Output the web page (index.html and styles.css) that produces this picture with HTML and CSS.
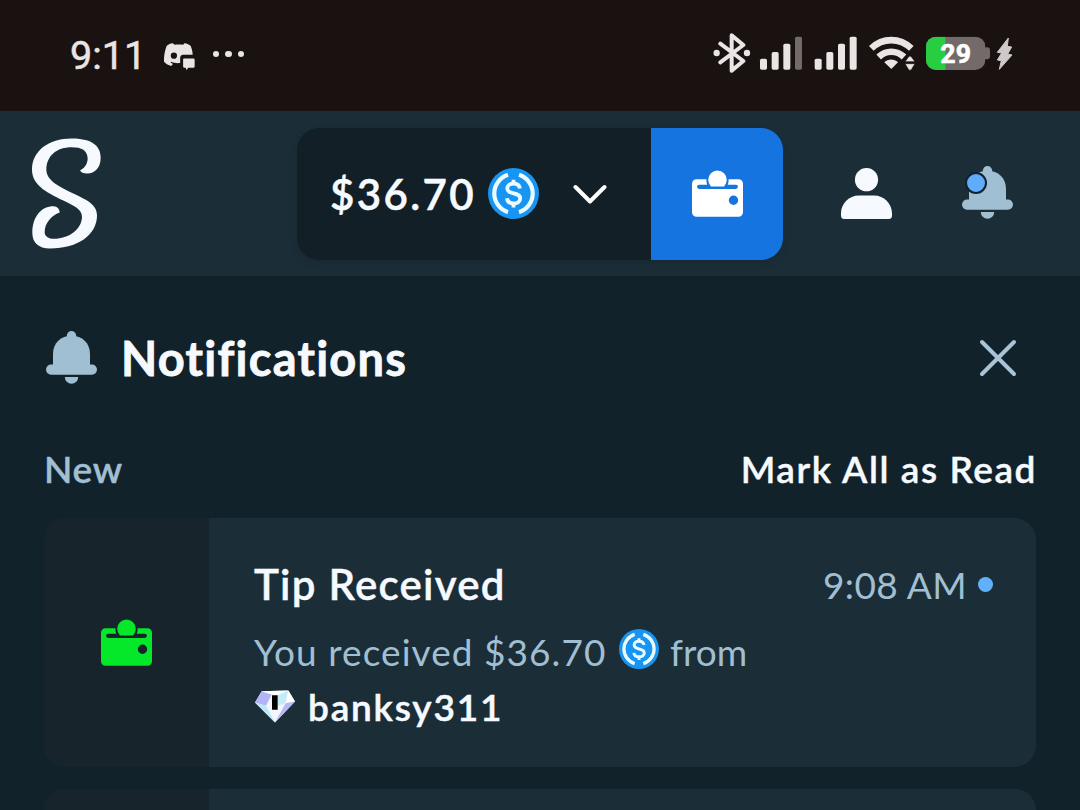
FILE: index.html
```html
<!DOCTYPE html>
<html lang="en">
<head>
  <meta charset="UTF-8">
  <meta name="viewport" content="width=device-width, initial-scale=1.0">
  <title>Notifications</title>
  <link rel="stylesheet" href="styles.css">
</head>
<body>

<!-- shared icons -->
<svg class="sprite">
  <symbol id="bell" viewBox="0 0 51 53">
    <circle cx="25.5" cy="4.7" r="4.7"/>
    <path d="M7 34V23C7 12 15 4.800 25.500 4.800S44 12 44 23v11z"/>
    <rect x="0" y="33.500" width="51" height="10.200" rx="5.100"/>
    <path d="M18.800 46h13.400a6.700 6.700 0 0 1-13.400 0z"/>
  </symbol>
  <symbol id="wallet" viewBox="0 0 51 47">
    <path fill-rule="evenodd" d="M4.500 9.300H14.400a12 12 0 0 0 .8 5.400H7.200a2.150 2.150 0 0 0 0 4.300h36.600a2.150 2.150 0 0 0 0-4.300H35.800a12 12 0 0 0 .8-5.400h9.900A4.500 4.500 0 0 1 51 13.800v28.400a4.500 4.500 0 0 1-4.500 4.500h-42A4.500 4.500 0 0 1 0 42.200V13.800a4.500 4.500 0 0 1 4.500-4.500zM41.500 25.600a4.700 4.700 0 1 0 0 9.400 4.700 4.700 0 0 0 0-9.400z"/>
    <path d="M18.900 16.400a9.300 9.300 0 1 1 13.200 0z"/>
  </symbol>
  <symbol id="usdc" viewBox="0 0 51 51">
    <circle cx="25.500" cy="25.500" r="25.500" fill="#1894f2"/>
    <g fill="none" stroke="#e9fbff" stroke-width="4.200">
      <path d="M20 6.800a19.600 19.600 0 0 0 0 37.400M31 6.800a19.600 19.600 0 0 1 0 37.400"/>
      <path stroke-width="3.800" d="M32 20.500c-.6-3.200-3-5-6.400-5-3.700 0-6.300 2-6.300 5 0 6.800 12.900 3 12.900 10 0 3-2.700 5-6.600 5-3.800 0-6.300-2-6.600-5.200M25.500 11.800v4M25.500 35v4.400"/>
    </g>
  </symbol>
</svg>

<!-- phone status bar -->
<div class="status-bar">
  <div class="status-left">
    <span class="clock">9:11</span>
    <svg class="discord" viewBox="342 68 94 82">
      <path fill="#e9e5e4" d="M369 69c-9 1-15 4-19 8-5 12-9 30-8 48 6 6 14 11 22 13l5-6-7-5 2-2c9 4 16 5 27 4v-15c0-6 3-10 9-10h29c0-10-3-20-6-27-4-4-11-7-19-8l-4 4c-9-1-17-1-26 0l-5-4zM372 97a9 9 0 1 1 0 19 9 9 0 0 1 0-19z"/>
      <path fill="#e9e5e4" d="M402 115h29q4 0 4 4v20q0 4-4 4h-15l-6 7-2-7h-4q-4 0-4-4v-20q0-4 2-4z"/>
    </svg>
    <span class="dots"><i></i><i></i><i></i></span>
  </div>
  <div class="status-right">
    <svg width="41.670" height="40" viewBox="40 40 125 120">
      <path fill="none" stroke="#e9e5e4" stroke-width="12" stroke-linecap="round" stroke-linejoin="round" d="M62 72l69 52-35 29V47l35 29-69 52"/>
      <circle cx="51" cy="100" r="9.500"/><circle cx="142" cy="100" r="9.500"/>
    </svg>
    <svg width="53.330" height="40" viewBox="165 40 160 120">
      <rect x="180" y="117" width="21" height="33" rx="5"/>
      <rect x="215" y="97" width="21" height="53" rx="5"/>
      <rect x="250" y="72" width="21" height="78" rx="5"/>
      <rect x="285" y="51" width="21" height="99" rx="5" fill="#726b69"/>
    </svg>
    <svg width="55" height="40" viewBox="325 40 165 120">
      <rect x="345" y="117" width="21" height="33" rx="5"/>
      <rect x="380" y="97" width="21" height="53" rx="5"/>
      <rect x="415" y="72" width="21" height="78" rx="5"/>
      <rect x="450" y="51" width="21" height="99" rx="5"/>
    </svg>
    <svg width="57.670" height="40" viewBox="490 40 173 120">
      <g fill="none" stroke="#e9e5e4" stroke-width="20">
        <path d="M515 86c34-33 85-33 120 0"/>
        <path d="M537 112c22-21 54-21 76 0"/>
      </g>
      <path d="M554 128c11-11 30-11 41 0l-20 20z"/>
      <path d="M616 126l11-15q4-4 8 0l11 15zM616 132h30l-11 18q-4 4-8 0z" stroke="#1a1210" stroke-width="2"/>
    </svg>
    <svg width="72" height="40" viewBox="663 40 216 120">
      <clipPath id="level"><rect x="678" y="51" width="178" height="100" rx="30"/></clipPath>
      <rect x="845" y="83" width="25" height="36" rx="9" fill="#726b69"/>
      <g clip-path="url(#level)">
        <rect x="678" y="51" width="178" height="100" fill="#726b69"/>
        <rect x="678" y="51" width="58" height="100" fill="#27cf40"/>
      </g>
      <text class="percent" x="767" y="129" text-anchor="middle">29</text>
    </svg>
    <svg width="22" height="40" viewBox="879 40 66 120">
      <path fill="#cfcac9" stroke="#cfcac9" stroke-width="3" stroke-linejoin="round" d="M925 55l-33 43 13 2-13 21 12 2-6 26 38-43-13-3 12-21-13-2z"/>
    </svg>
  </div>
</div>

<!-- site header -->
<header class="header">
  <svg class="logo" viewBox="96 86 207 332">
    <path d="M240 182C250 180 263 165 263 148 263 122 245 113 215 113 170 113 140 138 139 180 139 212 175 230 215 250 260 271 291 285 291 318 291 375 235 417 150 417 115 417 97 400 97 370 97 320 125 290 160 290 173 290 179 300 179 309 155 318 134 340 134 368 134 380 145 388 163 388 205 388 246 360 246 322 246 300 225 290 190 273 135 247 96 225 96 180 96 125 145 87 215 87 270 87 302 105 302 145 302 175 285 192 262 192 250 192 242 188 240 182z"/>
  </svg>
  <div class="balance">
    <div class="amount">
      <span>$36.70</span>
      <svg class="coin"><use href="#usdc"/></svg>
      <svg class="chevron" viewBox="0 0 34 20"><path d="M2.500 3L17 17.500 31.500 3"/></svg>
    </div>
    <div class="wallet-btn"><svg class="wallet"><use href="#wallet"/></svg></div>
  </div>
  <div class="actions">
    <svg class="user" viewBox="0 0 51 51">
      <circle cx="25.500" cy="11.700" r="11.600"/>
      <path d="M18 27.500h15c10 0 18 8 18 18v2a3.500 3.500 0 0 1-3.500 3.500h-44A3.500 3.500 0 0 1 0 47.500v-2c0-10 8-18 18-18z"/>
    </svg>
    <div class="alerts">
      <svg class="bell"><use href="#bell"/></svg>
      <span class="badge"></span>
    </div>
  </div>
</header>

<main class="panel">
  <div class="panel-head">
    <svg class="bell"><use href="#bell"/></svg>
    <h1>Notifications</h1>
    <svg class="close" viewBox="0 0 38 38"><path d="M3 3l32 32M35 3L3 35"/></svg>
  </div>

  <div class="section-head">
    <span class="section-name">New</span>
    <span class="mark-read">Mark All as Read</span>
  </div>

  <div class="card">
    <div class="card-icon"><svg class="wallet"><use href="#wallet"/></svg></div>
    <div class="card-body">
      <div class="card-title">
        <h2>Tip Received</h2>
        <span class="time">9:08 AM</span>
        <span class="unread"></span>
      </div>
      <div class="line">
        <span class="received">You received $36.70</span>
        <svg class="coin-small"><use href="#usdc"/></svg>
        <span class="from">from</span>
      </div>
      <div class="line">
        <svg class="gem" viewBox="45 418 120 98">
          <path fill="#f4f6ff" d="M45 455l20-34 80-2 20 33-60 63z"/>
          <path fill="#b3b4f6" d="M45 455l20-34 30 10-17 34z"/>
          <path fill="#b9e8f8" d="M45 455l33 10 27 50z"/>
          <path fill="#fff" d="M65 421l80-2-32 14-18-2z"/>
          <path fill="#c4ecf8" d="M113 433l32-14-8 38-24 8z"/>
          <path fill="#fff" d="M145 419l20 33-28 5z"/>
          <path fill="#b5b8f4" d="M165 452l-60 63 32-58z"/>
          <path fill="#000" d="M96 433h17v44H96z"/>
        </svg>
        <span class="username">banksy311</span>
      </div>
    </div>
  </div>

  <!-- next notification, only its top edge is in view -->
  <div class="card card-peek">
    <div class="card-icon"></div>
    <div class="card-body"></div>
  </div>
</main>

</body>
</html>
```

FILE: styles.css
```css
* {
  margin: 0;
  padding: 0;
  box-sizing: border-box;
}
body {
  height: 810px;
  background: #12222b;
  color: #f6faff;
  font-family: Lato, sans-serif;
  overflow: hidden;
}
svg {
  display: block;
  flex-shrink: 0;
  fill: currentColor;
}
.sprite {
  width: 0;
  height: 0;
  position: absolute;
}

/* status bar */
.status-bar {
  display: flex;
  justify-content: space-between;
  align-items: center;
  height: 111px;
  padding: 0 65px 5px 70px;
  background: #1a1210;
  color: #e9e5e4;
}
.status-left, .status-right {
  display: flex;
  align-items: center;
}
.clock {
  width: 94px;
  font-family: Roboto, sans-serif;
  font-size: 39.5px;
  line-height: 40px;
  padding-top: 5px;
  -webkit-text-stroke: 0.5px;
}
.discord {
  width: 31px;
  height: 27px;
  margin-top: 6px;
}
.dots {
  display: flex;
  gap: 6px;
  margin: 2px 0 0 18px;
}
.dots i {
  width: 6.300px;
  height: 6.300px;
  border-radius: 50%;
  background: #e9e5e4;
}
.percent {
  font-family: Roboto, sans-serif;
  font-size: 80px;
  font-weight: 700;
  fill: #fff;
  stroke: #fff;
  stroke-width: 2;
}

/* header */
.header {
  display: flex;
  align-items: center;
  height: 165px;
  padding: 0 67px 0 32px;
  background: #1b2e38;
}
.logo {
  width: 69px;
  height: 111px;
}
.balance {
  display: flex;
  width: 486px;
  height: 132px;
  margin-left: 196px;
  border-radius: 22px;
  overflow: hidden;
  box-shadow: 0 4px 8px rgba(0, 0, 0, 0.12);
}
.amount {
  display: flex;
  align-items: center;
  width: 354px;
  padding-left: 33px;
  background: #121f26;
  font-size: 42px;
  font-weight: 600;
  letter-spacing: 2.4px;
  -webkit-text-stroke: 0.5px;
}
.amount span {
  width: 158px;
  white-space: nowrap;
}
.coin {
  width: 51px;
  height: 51px;
}
.chevron {
  width: 34px;
  height: 20px;
  margin-left: 34px;
  fill: none;
  stroke: #fff;
  stroke-width: 4;
  stroke-linecap: round;
  stroke-linejoin: round;
}
.wallet-btn {
  display: flex;
  flex: 1;
  align-items: center;
  justify-content: center;
  background: #1574e0;
  color: #fff;
}
.wallet {
  width: 51px;
  height: 47px;
}
.actions {
  display: flex;
  align-items: center;
  gap: 70px;
  margin-left: auto;
}
.user {
  width: 51px;
  height: 51px;
}
.bell {
  width: 51px;
  height: 53px;
  color: #a1bfd2;
}
.alerts {
  position: relative;
  margin-bottom: 2px;
}
.badge {
  position: absolute;
  left: 3px;
  top: 6px;
  width: 22px;
  height: 22px;
  border: 2px solid #12222b;
  border-radius: 50%;
  background: #5eacfa;
}

/* notifications */
.panel {
  padding: 0 44px;
}
.panel-head {
  display: flex;
  align-items: center;
  height: 165px;
  padding: 0 19px 2px 2px;
}
.panel-head h1 {
  margin-left: 24px;
  font-size: 47px;
  font-weight: 700;
  letter-spacing: 1.25px;
  -webkit-text-stroke: 0.8px;
}
.close {
  width: 38px;
  height: 38px;
  margin: 1px 0 0 auto;
  fill: none;
  stroke: #a9c4d6;
  stroke-width: 4;
  stroke-linecap: round;
}
.section-head {
  display: flex;
  align-items: center;
  justify-content: space-between;
  height: 55px;
  margin-bottom: 22px;
  font-size: 37px;
  font-weight: 600;
  -webkit-text-stroke: 0.4px;
}
.section-name {
  color: #a1bfd2;
  letter-spacing: 0.8px;
}
.mark-read {
  margin-right: -1px;
  letter-spacing: 1.55px;
}
.card {
  display: flex;
  height: 249px;
  margin-bottom: 22px;
  border-radius: 22px;
  background: #1b2e38;
  overflow: hidden;
}
.card-peek {
  height: 21px;
  margin-bottom: 0;
  border-radius: 22px 22px 0 0;
}
.card-icon {
  display: flex;
  align-items: center;
  justify-content: center;
  width: 165px;
  background: #17242c;
  color: #04e829;
}
.card-body {
  flex: 1;
  padding: 38px 43px 0 45px;
}
.card-peek .card-body {
  padding: 0;
}
.card-title {
  display: flex;
  align-items: center;
  height: 56px;
  margin-bottom: 11px;
}
.card-title h2 {
  font-size: 42px;
  font-weight: 600;
  letter-spacing: 1.25px;
  -webkit-text-stroke: 0.4px;
}
.time {
  margin-left: auto;
  color: #a1bfd2;
  font-size: 37px;
  letter-spacing: 0.4px;
}
.unread {
  width: 15px;
  height: 15px;
  margin-left: 11px;
  border-radius: 50%;
  background: #62b0fb;
}
.line {
  display: flex;
  align-items: center;
  height: 56px;
  color: #a1bfd2;
  font-size: 37px;
  white-space: nowrap;
}
.line + .line {
  height: 54px;
}
.received {
  width: 365px;
  letter-spacing: 1.05px;
}
.coin-small {
  width: 40px;
  height: 40px;
  margin-bottom: 4px;
}
.from {
  margin-left: 11px;
}
.gem {
  width: 40px;
  height: 33px;
  margin: 0 13px 0 1px;
}
.username {
  color: #f6faff;
  font-weight: 600;
  letter-spacing: 1.8px;
  -webkit-text-stroke: 0.5px;
}
```
